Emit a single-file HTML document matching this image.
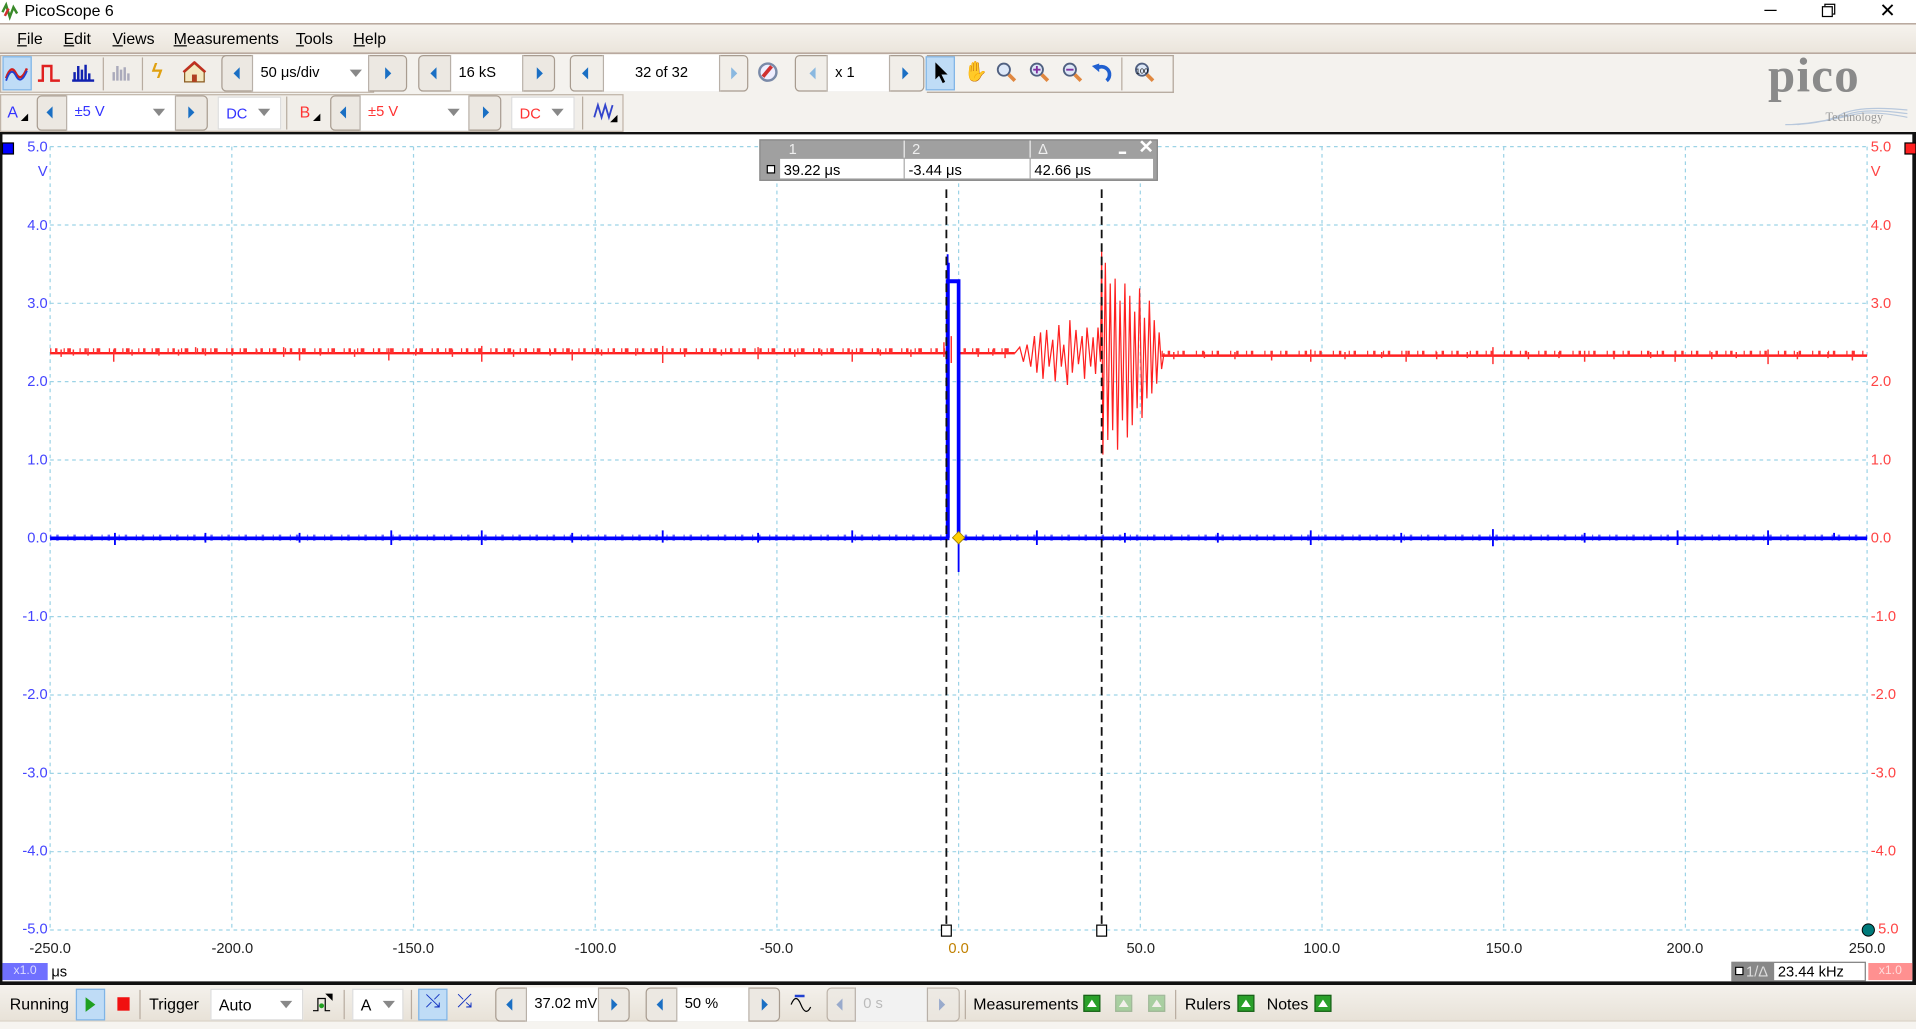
<!DOCTYPE html>
<html><head><meta charset="utf-8">
<style>
*{margin:0;padding:0;box-sizing:border-box}
html,body{width:1916px;height:1029px;overflow:hidden;background:#fff;font-family:"Liberation Sans",sans-serif}
#w{position:absolute;left:0;top:0;width:1567px;height:842px;transform:scale(1.22272,1.2221);transform-origin:0 0;background:#f4f2ee}
.a{position:absolute}
.t{position:absolute;font-size:12px;color:#000;white-space:nowrap}
.grp{position:absolute;border:1px solid #a89c90;border-radius:4px;background:#ece8e2}
.fld{position:absolute;background:#fff;border-left:1px solid #b8b0a8;border-right:1px solid #b8b0a8;font-size:12px;line-height:28px;padding-left:6px;white-space:nowrap}
.la{position:absolute;width:0;height:0;border-top:5px solid transparent;border-bottom:5px solid transparent;border-right:5px solid #1a6fc4}
.ra{position:absolute;width:0;height:0;border-top:5px solid transparent;border-bottom:5px solid transparent;border-left:5px solid #1a6fc4}
.dd{position:absolute;width:0;height:0;border-left:5px solid transparent;border-right:5px solid transparent;border-top:6px solid #888}
.sel{position:absolute;background:#bfdcf6;border:1px solid #7fb4e6}
.sep{position:absolute;width:1px;background:#b8aca0}
.yl{position:absolute;font-size:12px;color:#4444ff;width:30px;text-align:right}
.yr{position:absolute;font-size:12px;color:#ff4444}
.xl{position:absolute;font-size:12px;color:#222;width:60px;text-align:center}
.gb{position:absolute;width:14px;height:14px;background:#2aa02a;border:1px solid #1a601a}
.gb:after{content:"";position:absolute;left:2px;top:3px;border-left:4px solid transparent;border-right:4px solid transparent;border-bottom:6px solid #fff}
</style></head><body><div id="w">
<div class="a" style="left:0;top:0;width:1567px;height:19px;background:#fff"></div>
<svg class="a" style="left:1px;top:1px" width="16" height="16"><path d="M1 9 L4 3 L7 13 L10 5 L13 10" stroke="#3a8a2a" stroke-width="2" fill="none"/><path d="M3 12 L6 6" stroke="#d03030" stroke-width="2"/></svg>
<div class="t" style="left:20px;top:1px;font-size:13px">PicoScope 6</div>
<div class="a" style="left:1443px;top:8px;width:10px;height:1px;background:#000"></div>
<div class="a" style="left:1492px;top:3px;width:9px;height:9px;border:1px solid #000;background:#fff"></div>
<div class="a" style="left:1490px;top:5px;width:9px;height:9px;border:1px solid #000;background:#fff"></div>
<div class="t" style="left:1537px;top:-1px;font-size:16px">✕</div>
<div class="a" style="left:0;top:19px;width:1567px;height:25px;background:linear-gradient(#f6f3ee,#ebe5dc);border-top:1px solid #a89488;border-bottom:1px solid #a89488"></div>
<div class="t" style="left:14px;top:24px;font-size:13px"><u>F</u>ile</div>
<div class="t" style="left:52px;top:24px;font-size:13px"><u>E</u>dit</div>
<div class="t" style="left:92px;top:24px;font-size:13px"><u>V</u>iews</div>
<div class="t" style="left:142px;top:24px;font-size:13px"><u>M</u>easurements</div>
<div class="t" style="left:242px;top:24px;font-size:13px"><u>T</u>ools</div>
<div class="t" style="left:289px;top:24px;font-size:13px"><u>H</u>elp</div>
<div class="a" style="left:0;top:45px;width:306px;height:31px;border:1px solid #c0b4a8;background:#f1eee9"></div>
<div class="sel" style="left:2px;top:46px;width:24px;height:28px"></div>
<svg class="a" style="left:4px;top:52px" width="20" height="16"><path d="M1 12 Q5 0 9 8 T18 4" stroke="#d02020" stroke-width="2" fill="none"/><path d="M1 14 Q5 2 9 10 T18 6" stroke="#2040d0" stroke-width="1.5" fill="none"/></svg>
<svg class="a" style="left:30px;top:52px" width="20" height="16"><path d="M1 14 H5 V2 H12 V14 H19" stroke="#e02020" stroke-width="2" fill="none"/></svg>
<svg class="a" style="left:58px;top:51px" width="20" height="16"><path d="M3 15V8M6 15V3M9 15V6M12 15V2M15 15V9M1 15H19" stroke="#1020b0" stroke-width="2"/></svg>
<div class="sep" style="left:84px;top:47px;height:27px"></div>
<svg class="a" style="left:90px;top:51px" width="20" height="18"><path d="M3 15V8M6 15V3M9 15V6M12 15V4M15 15V9" stroke="#aab" stroke-width="2"/></svg>
<div class="sep" style="left:116px;top:47px;height:27px"></div>
<div class="t" style="left:124px;top:49px;font-size:17px;color:#e0a010;font-weight:bold">ϟ</div>
<svg class="a" style="left:149px;top:50px" width="20" height="18"><path d="M2 9 L10 2 L18 9 V17 H2 Z" fill="#f4e8c0" stroke="#8a5a20"/><rect x="8" y="11" width="4" height="6" fill="#b04020"/><path d="M1 9 L10 1 L19 9" stroke="#c03020" stroke-width="2" fill="none"/></svg>
<div class="grp" style="left:181px;top:45px;width:152px;height:30px"></div>
<div class="la" style="left:191px;top:55px"></div>
<div class="fld" style="left:206px;top:45px;width:96px;height:30px">50 μs/div</div>
<div class="dd" style="left:286px;top:57px"></div>
<div class="ra" style="left:315px;top:55px"></div>
<div class="grp" style="left:342px;top:45px;width:112px;height:30px"></div>
<div class="la" style="left:352px;top:55px"></div>
<div class="fld" style="left:368px;top:45px;width:60px;height:30px">16 kS</div>
<div class="ra" style="left:439px;top:55px"></div>
<div class="grp" style="left:466px;top:45px;width:146px;height:30px;background:#f1eee9"></div>
<div class="la" style="left:476px;top:55px"></div>
<div class="fld" style="left:493px;top:45px;width:96px;height:30px;text-align:center;padding:0">32 of 32</div>
<div class="ra" style="left:598px;top:55px;border-left-color:#8ab8e0"></div>
<div class="a" style="left:620px;top:51px;width:16px;height:16px;border-radius:50%;border:2px solid #7a8aa8;background:#eef"></div>
<div class="a" style="left:626px;top:53px;width:3px;height:11px;background:#d03030;transform:rotate(40deg)"></div>
<div class="grp" style="left:650px;top:45px;width:106px;height:30px;background:#f1eee9"></div>
<div class="la" style="left:662px;top:55px;border-right-color:#8ab8e0"></div>
<div class="fld" style="left:676px;top:45px;width:52px;height:30px">x 1</div>
<div class="ra" style="left:738px;top:55px"></div>
<div class="sel" style="left:757px;top:46px;width:24px;height:28px"></div>
<svg class="a" style="left:763px;top:50px" width="14" height="20"><path d="M2 1 V15 L5 12 L8 18 L10 17 L7 11 H12 Z" fill="#000"/></svg>
<div class="t" style="left:788px;top:49px;font-size:16px">✋</div>
<svg class="a" style="left:813px;top:50px" width="140" height="20"><g fill="#dde8f8" stroke="#506080" stroke-width="1.5"><circle cx="8" cy="7" r="5"/><circle cx="35" cy="7" r="5"/><circle cx="62" cy="7" r="5"/><circle cx="121" cy="7" r="5"/></g><g stroke="#e08840" stroke-width="3"><path d="M12 11 L17 16M39 11 L44 16M66 11 L71 16M125 11 L130 16"/></g><path d="M32 7H38M35 4V10" stroke="#8030a0" stroke-width="1.5"/><path d="M59 7H65" stroke="#8030a0" stroke-width="1.5"/><path d="M84 6 A6 6 0 1 1 92 16" stroke="#2060d0" stroke-width="3" fill="none"/><path d="M80 4 L86 2 L86 9 Z" fill="#2060d0"/><text x="116" y="10" font-size="6" font-family="Liberation Sans">100</text></svg>
<div class="sep" style="left:917px;top:47px;height:27px"></div>
<div class="a" style="left:758px;top:45px;width:202px;height:31px;border:1px solid #b0a498;border-left:none"></div>
<div class="t" style="left:1446px;top:38px;font-family:'Liberation Serif',serif;font-size:40px;color:#8a8a8a;font-weight:bold;letter-spacing:1px">pico</div>
<svg class="a" style="left:1460px;top:88px" width="100" height="16"><path d="M0 14 Q30 14 45 6 T100 2M5 14 Q35 12 50 6 T100 5M10 14 Q40 10 55 6 T100 8" stroke="#b8c8dc" fill="none"/></svg>
<div class="t" style="left:1493px;top:91px;font-family:'Liberation Serif',serif;font-size:10px;color:#999">Technology</div>
<div class="a" style="left:0;top:77px;width:510px;height:31px;border:1px solid #c0b4a8;background:#f1eee9"></div>
<div class="t" style="left:6px;top:84px;font-size:13px;color:#3333ff">A</div>
<div class="a" style="left:17px;top:93px;border-left:6px solid transparent;border-bottom:6px solid #000"></div>
<div class="grp" style="left:30px;top:78px;width:140px;height:29px"></div>
<div class="la" style="left:38px;top:87px"></div>
<div class="fld" style="left:54px;top:78px;width:90px;height:29px;color:#3333ff;line-height:27px">±5 V</div>
<div class="dd" style="left:125px;top:89px"></div>
<div class="ra" style="left:154px;top:87px"></div>
<div class="fld" style="left:178px;top:79px;width:52px;height:27px;color:#3333ff;line-height:26px;border:1px solid #ddd">DC</div>
<div class="dd" style="left:211px;top:89px"></div>
<div class="sep" style="left:234px;top:79px;height:27px"></div>
<div class="t" style="left:245px;top:84px;font-size:13px;color:#ff3333">B</div>
<div class="a" style="left:256px;top:93px;border-left:6px solid transparent;border-bottom:6px solid #000"></div>
<div class="grp" style="left:270px;top:78px;width:140px;height:29px"></div>
<div class="la" style="left:278px;top:87px"></div>
<div class="fld" style="left:294px;top:78px;width:90px;height:29px;color:#ff3333;line-height:27px">±5 V</div>
<div class="dd" style="left:366px;top:89px"></div>
<div class="ra" style="left:395px;top:87px"></div>
<div class="fld" style="left:418px;top:79px;width:52px;height:27px;color:#ff3333;line-height:26px;border:1px solid #ddd">DC</div>
<div class="dd" style="left:451px;top:89px"></div>
<div class="sep" style="left:476px;top:79px;height:27px"></div>
<svg class="a" style="left:484px;top:83px" width="22" height="18"><path d="M2 13 L5 3 L8 13 L11 3 L14 13 L17 3" stroke="#3344cc" stroke-width="1.5" fill="none"/><path d="M15 17 L21 11 V17 Z" fill="#000"/></svg>
<div class="a" style="left:0;top:108px;width:1567px;height:698px;background:#fff;border-top:2px solid #111;border-left:2px solid #111;border-right:3px solid #111;border-bottom:3px solid #111"></div>
<svg class="a" style="left:0;top:0" width="1567" height="842">
<g stroke="#9cd3e6" stroke-width="1" stroke-dasharray="3,3">
<path d="M41 120V761M189.6 120V761M338.2 120V761M486.8 120V761M635.4 120V761M784 120V761M932.6 120V761M1081.2 120V761M1229.8 120V761M1378.4 120V761M1527 120V761"/>
<path d="M41 120H1527M41 184.1H1527M41 248.2H1527M41 312.3H1527M41 376.4H1527M41 440.5H1527M41 504.6H1527M41 568.7H1527M41 632.8H1527M41 696.9H1527M41 761H1527"/>
</g>
<path d="M41 289H775M784 289H830M950 291H1527" stroke="#ff2020" stroke-width="2" fill="none"/>
<path d="M41 287H775M784 287H830" stroke="#ff3030" stroke-width="4" stroke-dasharray="1,3,2,5,1,2,3,7" fill="none"/>
<path d="M950 289H1527" stroke="#ff3030" stroke-width="4" stroke-dasharray="1,4,2,6,1,3,2,9" fill="none"/>
<g stroke="#ff3030" stroke-width="1.2">
<path d="M50 286v6M60 286v5M72 285v6M93 286v10M108 286v5M130 285v6M146 286v5M160 284v6M168 285v6M190 286v5M210 286v4M232 284v8M245 285v10M262 286v5M290 286v6M318 285v10M340 286v5M370 286v6M394 283v13M420 286v6M450 286v5M468 286v9M492 286v5M520 285v6M542 283v14M560 286v6M590 286v5M620 284v10M650 286v6M672 286v5M697 286v10M720 286v5M745 286v6M772 280v12M778 275v22M800 286v6M812 286v5M822 285v8"/>
<path d="M960 288v6M985 288v5M1010 288v6M1040 288v7M1072 286v10M1100 288v6M1130 288v5M1150 287v9M1175 288v6M1200 288v5M1221 284v14M1250 288v6M1275 288v5M1296 287v9M1320 288v6M1350 288v5M1370 287v9M1400 288v6M1420 288v5M1446 286v12M1470 288v6M1495 288v5M1515 287v8"/>
</g>
<polyline fill="none" stroke="#ff2020" stroke-width="1" points="830,289 834,284 837,296 840,282 843,300 846,275 848,305 851,272 853,310 856,270 858,300 861,278 863,312 866,266 868,300 870,282 873,315 875,262 877,305 880,270 882,298 885,275 887,310 889,268 892,300 894,276 896,306 898,268 900,296 901,205 902,372 904,215 906,360 908,232 910,352 912,228 914,368 916,246 918,344 920,232 922,358 924,242 926,348 928,255 930,334 932,236 934,342 936,260 938,326 940,246 942,322 944,262 946,314 948,272 950,302 952,289"/>
<path d="M41 440.5H775V230H784V440.5H1527" stroke="#0000ff" stroke-width="3" fill="none"/>
<path d="M41 440H775M784 440H1527" stroke="#0000ff" stroke-width="5" stroke-dasharray="1,4,2,7" opacity=".6" fill="none"/>
<path d="M775 440V208M776 440V215M775 231H784M784 440V468" stroke="#0000ff" stroke-width="1.5"/>
<g stroke="#0000ff" stroke-width="1.5">
<path d="M94 436v10M168 436v8M245 436v8M320 434v12M394 434v12M468 436v8M542 434v10M620 436v8M697 434v10M848 434v12M920 436v8M996 436v8M1072 434v12M1146 436v8M1221 433v14M1296 436v8M1372 434v12M1446 434v12M1500 436v6"/>
</g>
<path d="M774 155V762M901 155V762" stroke="#111" stroke-width="1.5" stroke-dasharray="7,4"/>
<rect x="770" y="757" width="8" height="9" fill="#fff" stroke="#000"/>
<rect x="897" y="757" width="8" height="9" fill="#fff" stroke="#000"/>
<path d="M784 435 L789 440 L784 445 L779 440 Z" fill="#ffd000" stroke="#a08000" stroke-width=".7"/>
<circle cx="1528" cy="761" r="5" fill="#007a7a" stroke="#000" stroke-width=".8"/>
<rect x="2" y="117" width="9" height="9" fill="#0000ff" stroke="#000"/>
<rect x="1558" y="117" width="9" height="9" fill="#ff2020" stroke="#000"/>
</svg>
<div class="yl" style="left:9px;top:113px">5.0</div><div class="yl" style="left:9px;top:133px">V</div>
<div class="yl" style="left:9px;top:177px">4.0</div><div class="yl" style="left:9px;top:241px">3.0</div><div class="yl" style="left:9px;top:305px">2.0</div><div class="yl" style="left:9px;top:369px">1.0</div><div class="yl" style="left:9px;top:433px">0.0</div><div class="yl" style="left:9px;top:497px">-1.0</div><div class="yl" style="left:9px;top:561px">-2.0</div><div class="yl" style="left:9px;top:625px">-3.0</div><div class="yl" style="left:9px;top:689px">-4.0</div><div class="yl" style="left:9px;top:753px">-5.0</div>
<div class="yr" style="left:1530px;top:113px">5.0</div><div class="yr" style="left:1530px;top:133px">V</div>
<div class="yr" style="left:1530px;top:177px">4.0</div><div class="yr" style="left:1530px;top:241px">3.0</div><div class="yr" style="left:1530px;top:305px">2.0</div><div class="yr" style="left:1530px;top:369px">1.0</div><div class="yr" style="left:1530px;top:433px">0.0</div><div class="yr" style="left:1530px;top:497px">-1.0</div><div class="yr" style="left:1530px;top:561px">-2.0</div><div class="yr" style="left:1530px;top:625px">-3.0</div><div class="yr" style="left:1530px;top:689px">-4.0</div><div class="yr" style="left:1536px;top:753px">5.0</div>
<div class="xl" style="left:11px;top:769px">-250.0</div><div class="xl" style="left:160px;top:769px">-200.0</div><div class="xl" style="left:308px;top:769px">-150.0</div><div class="xl" style="left:457px;top:769px">-100.0</div><div class="xl" style="left:605px;top:769px">-50.0</div><div class="xl" style="left:754px;top:769px;color:#c08000">0.0</div><div class="xl" style="left:903px;top:769px">50.0</div><div class="xl" style="left:1051px;top:769px">100.0</div><div class="xl" style="left:1200px;top:769px">150.0</div><div class="xl" style="left:1348px;top:769px">200.0</div><div class="xl" style="left:1497px;top:769px">250.0</div>
<div class="a" style="left:2px;top:788px;width:37px;height:14px;background:#7070ff;color:#ddf;font-size:10px;text-align:center;line-height:14px">x1.0</div>
<div class="t" style="left:42px;top:788px">μs</div>
<div class="a" style="left:1416px;top:787px;width:110px;height:16px;background:#888;border:1px solid #888"></div>
<div class="a" style="left:1419px;top:791px;width:7px;height:7px;border:1px solid #000;background:#fff"></div>
<div class="t" style="left:1428px;top:788px;color:#ddd">1/Δ</div>
<div class="a" style="left:1451px;top:788px;width:74px;height:14px;background:#fff"></div>
<div class="t" style="left:1454px;top:788px">23.44 kHz</div>
<div class="a" style="left:1528px;top:788px;width:36px;height:14px;background:#ff9090;color:#fdd;font-size:10px;text-align:center;line-height:14px">x1.0</div>
<div class="a" style="left:621px;top:114px;width:326px;height:34px;background:#a0a0a0;border:1px solid #888"></div>
<div class="t" style="left:645px;top:115px;color:#eee">1</div>
<div class="t" style="left:746px;top:115px;color:#eee">2</div>
<div class="t" style="left:849px;top:115px;color:#eee">Δ</div>
<div class="a" style="left:739px;top:115px;width:1px;height:14px;background:#eee"></div>
<div class="a" style="left:842px;top:115px;width:1px;height:14px;background:#eee"></div>
<div class="a" style="left:915px;top:124px;width:6px;height:2px;background:#fff"></div>
<div class="t" style="left:931px;top:111px;color:#fff;font-size:15px;font-weight:bold">✕</div>
<div class="a" style="left:627px;top:135px;width:7px;height:7px;border:1px solid #000;background:#fff"></div>
<div class="a" style="left:638px;top:130px;width:305px;height:16px;background:#fff"></div>
<div class="a" style="left:739px;top:130px;width:1px;height:16px;background:#aaa"></div>
<div class="a" style="left:842px;top:130px;width:1px;height:16px;background:#aaa"></div>
<div class="t" style="left:641px;top:132px">39.22 μs</div>
<div class="t" style="left:743px;top:132px">-3.44 μs</div>
<div class="t" style="left:846px;top:132px">42.66 μs</div>
<div class="a" style="left:0;top:806px;width:1567px;height:30px;background:linear-gradient(#f4f1ec,#e8e2d8);border-bottom:1px solid #d8d0c4"></div>
<div class="a" style="left:0;top:836px;width:1567px;height:6px;background:#f6f4f0"></div>
<div class="t" style="left:8px;top:814px;font-size:13px">Running</div>
<div class="sel" style="left:62px;top:809px;width:24px;height:26px"></div>
<div class="a" style="left:70px;top:816px;border-top:6px solid transparent;border-bottom:6px solid transparent;border-left:8px solid #20a020"></div>
<div class="a" style="left:96px;top:816px;width:10px;height:11px;background:#f01010"></div>
<div class="sep" style="left:114px;top:810px;height:24px"></div>
<div class="t" style="left:122px;top:814px;font-size:13px">Trigger</div>
<div class="fld" style="left:172px;top:809px;width:76px;height:26px;line-height:25px;border:1px solid #ddd;font-size:13px">Auto</div>
<div class="dd" style="left:229px;top:819px"></div>
<svg class="a" style="left:255px;top:812px" width="18" height="20"><path d="M1 15 H5 V5 H11 V15 H15" stroke="#000" fill="none"/><path d="M11 1 H17 V7 Z" fill="#000"/><circle cx="8" cy="11" r="2" fill="#20a020"/></svg>
<div class="sep" style="left:281px;top:810px;height:24px"></div>
<div class="fld" style="left:288px;top:809px;width:42px;height:26px;line-height:25px;border:1px solid #ddd;font-size:13px">A</div>
<div class="dd" style="left:313px;top:819px"></div>
<div class="sep" style="left:336px;top:810px;height:24px"></div>
<div class="sel" style="left:342px;top:809px;width:24px;height:26px"></div>
<div class="t" style="left:348px;top:811px;font-size:15px;color:#1030c0">⤯</div>
<div class="t" style="left:374px;top:811px;font-size:15px;color:#1030c0">⤰</div>
<div class="grp" style="left:405px;top:808px;width:110px;height:28px"></div>
<div class="la" style="left:414px;top:817px"></div>
<div class="fld" style="left:430px;top:808px;width:60px;height:28px;line-height:27px">37.02 mV</div>
<div class="ra" style="left:500px;top:817px"></div>
<div class="grp" style="left:528px;top:808px;width:110px;height:28px"></div>
<div class="la" style="left:537px;top:817px"></div>
<div class="fld" style="left:553px;top:808px;width:60px;height:28px;line-height:27px">50 %</div>
<div class="ra" style="left:623px;top:817px"></div>
<svg class="a" style="left:646px;top:812px" width="18" height="20"><path d="M1 10 Q5 0 9 10 T17 12" stroke="#000" fill="none"/><path d="M4 3 H12" stroke="#2040d0" stroke-width="2"/></svg>
<div class="grp" style="left:676px;top:808px;width:109px;height:28px;opacity:.7"></div>
<div class="la" style="left:684px;top:817px;border-right-color:#9ac"></div>
<div class="fld" style="left:699px;top:808px;width:60px;height:28px;line-height:27px;color:#bbb;background:#f2f2f2">0 s</div>
<div class="ra" style="left:768px;top:817px;border-left-color:#9ac"></div>
<div class="sep" style="left:789px;top:810px;height:24px"></div>
<div class="t" style="left:796px;top:814px;font-size:13px">Measurements</div>
<div class="gb" style="left:886px;top:814px"></div>
<div class="gb" style="left:912px;top:814px;opacity:.35"></div>
<div class="gb" style="left:939px;top:814px;opacity:.35"></div>
<div class="sep" style="left:961px;top:810px;height:24px"></div>
<div class="t" style="left:969px;top:814px;font-size:13px">Rulers</div>
<div class="gb" style="left:1012px;top:814px"></div>
<div class="t" style="left:1036px;top:814px;font-size:13px">Notes</div>
<div class="gb" style="left:1075px;top:814px"></div>
</div></body></html>
